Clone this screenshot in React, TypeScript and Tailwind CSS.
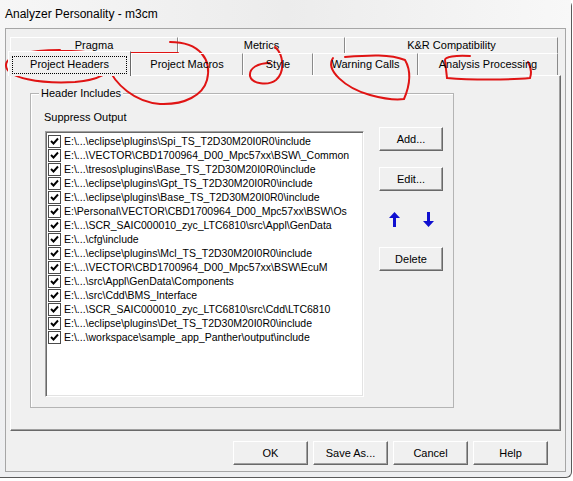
import React from 'react';

const items = [
  'E:\\...\\eclipse\\plugins\\Spi_TS_T2D30M20I0R0\\include',
  'E:\\...\\VECTOR\\CBD1700964_D00_Mpc57xx\\BSW\\_Common',
  'E:\\...\\tresos\\plugins\\Base_TS_T2D30M20I0R0\\include',
  'E:\\...\\eclipse\\plugins\\Gpt_TS_T2D30M20I0R0\\include',
  'E:\\...\\eclipse\\plugins\\Base_TS_T2D30M20I0R0\\include',
  'E:\\Personal\\VECTOR\\CBD1700964_D00_Mpc57xx\\BSW\\Os',
  'E:\\...\\SCR_SAIC000010_zyc_LTC6810\\src\\Appl\\GenData',
  'E:\\...\\cfg\\include',
  'E:\\...\\eclipse\\plugins\\Mcl_TS_T2D30M20I0R0\\include',
  'E:\\...\\VECTOR\\CBD1700964_D00_Mpc57xx\\BSW\\EcuM',
  'E:\\...\\src\\Appl\\GenData\\Components',
  'E:\\...\\src\\Cdd\\BMS_Interface',
  'E:\\...\\SCR_SAIC000010_zyc_LTC6810\\src\\Cdd\\LTC6810',
  'E:\\...\\eclipse\\plugins\\Det_TS_T2D30M20I0R0\\include',
  'E:\\...\\workspace\\sample_app_Panther\\output\\include',
];

const Btn: React.FC<{ label: string; className?: string }> = ({ label, className = '' }) => (
  <div
    className={`flex items-center justify-center bg-[#f0f0f0] border border-t-white border-l-white border-r-[#696969] border-b-[#696969] shadow-[inset_-1px_-1px_0_#a0a0a0] text-black ${className}`}
  >
    {label}
  </div>
);

const Check = () => (
  <div className="w-[13px] h-[13px] bg-white border border-[#4a4a4a] flex items-center justify-center shrink-0">
    <svg width="9" height="9" viewBox="0 0 9 9">
      <path d="M1 4 L3.5 6.5 L8 1.5" stroke="#000" strokeWidth="1.9" fill="none" />
    </svg>
  </div>
);

const Arrow: React.FC<{ down?: boolean }> = ({ down }) => (
  <svg width="11" height="15" viewBox="0 0 11 15" className={down ? 'rotate-180' : ''}>
    <path d="M5.5 0 L11 6 L7 6 L7 15 L4 15 L4 6 L0 6 Z" fill="#1010d0" />
  </svg>
);

const BackTab: React.FC<{ label: string; w: string }> = ({ label, w }) => (
  <div className={`${w} h-[16px] flex items-center justify-center border-t border-l border-t-white border-l-white border-r border-r-[#8a8a8a]`}>
    {label}
  </div>
);

const FrontTab: React.FC<{ label: string; w: string }> = ({ label, w }) => (
  <div className={`${w} h-[22px] flex items-center justify-center border-t border-l border-t-white border-l-white border-r border-r-[#8a8a8a]`}>
    {label}
  </div>
);

export default function App() {
  return (
    <div className="relative w-[573px] h-[481px] overflow-hidden bg-white text-[11px] text-black font-['Liberation_Sans',Arial,sans-serif]">
      <div className="w-[572px] h-[478px] border-r border-b border-[#5a5a5a] rounded-br-[6px] rounded-tr-[6px] bg-gradient-to-b from-[#f7f7f7] to-[#eeeff1]">
        <div className="h-[28px] pl-[5px] flex items-center text-[12px] bg-gradient-to-r from-[#f6f6f6] via-[#ececec] to-[#f8f8f8]">
          Analyzer Personality - m3cm
        </div>

        <div className="ml-[5px] w-[561px] h-[444px] border border-[#a6a6a6] bg-[#f0f0f0] flex flex-col">
          {/* tab control */}
          <div className="ml-[4px] mt-[8px] w-[551px] flex flex-col">
            <div className="flex">
              <BackTab label="Pragma" w="w-[168px]" />
              <BackTab label="Metrics" w="w-[167px]" />
              <BackTab label="K&R Compatibility" w="w-[213px]" />
            </div>
            <div className="flex items-end h-[22px] relative z-10">
              <div className="w-[123px] h-[25px] -ml-[2px] -mb-[1px] bg-[#f0f0f0] flex items-center justify-center border-t border-l border-t-white border-l-white border-r border-r-[#696969] px-[3px] pt-[1px]">
                <div className="w-full h-[18px] border border-dotted border-black flex items-center justify-center">
                  Project Headers
                </div>
              </div>
              <FrontTab label="Project Macros" w="w-[112px]" />
              <FrontTab label="Style" w="w-[70px]" />
              <FrontTab label="Warning Calls" w="w-[105px]" />
              <FrontTab label="Analysis Processing" w="w-[140px]" />
            </div>

            {/* page */}
            <div className="h-[356px] border border-t-white border-l-white border-r-[#696969] border-b-[#696969] shadow-[inset_-1px_-1px_0_#a0a0a0]">
              <div className="relative ml-[19px] mt-[17px] w-[424px] h-[315px] border border-[#b4b4b4] shadow-[inset_1px_1px_0_#ffffff]">
                <div className="absolute top-[-8px] left-[8px] px-[2px] bg-[#f0f0f0] leading-[14px]">Header Includes</div>
                <div className="flex">
                  <div className="pl-[13px] pt-[16px] flex flex-col">
                    <div className="leading-[14px]">Suppress Output</div>
                    <div className="ml-[1px] mt-[7px] w-[319px] h-[266px] bg-white border border-t-[#a0a0a0] border-l-[#a0a0a0] border-r-white border-b-white shadow-[inset_1px_1px_0_#696969,inset_-1px_-1px_0_#e3e3e3] pt-[2px] pl-[2px]">
                      {items.map((t) => (
                        <div key={t} className="h-[14px] flex items-center gap-[3px] whitespace-nowrap">
                          <Check />
                          <span className="leading-[14px] text-[10.5px]">{t}</span>
                        </div>
                      ))}
                    </div>
                  </div>
                  <div className="ml-[15px] pt-[33px] flex flex-col">
                    <Btn label="Add..." className="w-[64px] h-[24px]" />
                    <Btn label="Edit..." className="w-[64px] h-[24px] mt-[16px]" />
                    <div className="flex pl-[10px] gap-[23px] mt-[21px]">
                      <Arrow />
                      <Arrow down />
                    </div>
                    <Btn label="Delete" className="w-[64px] h-[24px] mt-[20px]" />
                  </div>
                </div>
              </div>
            </div>
          </div>

          {/* dialog buttons */}
          <div className="flex justify-end gap-[5px] pr-[17px] mt-[10px]">
            <Btn label="OK" className="w-[75px] h-[24px]" />
            <Btn label="Save As..." className="w-[75px] h-[24px]" />
            <Btn label="Cancel" className="w-[75px] h-[24px]" />
            <Btn label="Help" className="w-[75px] h-[24px]" />
          </div>
        </div>
      </div>

      {/* red pen marks drawn over the dialog */}
      <svg className="absolute inset-0 pointer-events-none" width="573" height="481" viewBox="0 0 573 481">
        <g stroke="#e01414" strokeWidth="2" fill="none" strokeLinecap="round">
          <path d="M60 50 C30 50 5 55 6 66 C7 78 40 84 75 82 C100 80 112 72 110 63 C108 55 90 50 50 51" />
          <path d="M170 42 C200 42 212 60 207 80 C203 95 185 105 160 104 C135 102 115 85 107 65 C105 57 112 53 130 53 L178 53" />
          <path d="M275 47 C284 55 285 72 276 80 C268 86 252 84 250 76 C249 68 258 63 270 63" />
          <path d="M333 58 C325 70 345 88 370 95 C385 99 398 100 404 99 C410 85 412 72 405 60 C390 54 370 55 345 57" />
          <path d="M470 56 C455 55 445 57 445 60 L447 78 C470 80 510 80 530 78 C532 72 531 67 528 62" />
        </g>
      </svg>
    </div>
  );
}
